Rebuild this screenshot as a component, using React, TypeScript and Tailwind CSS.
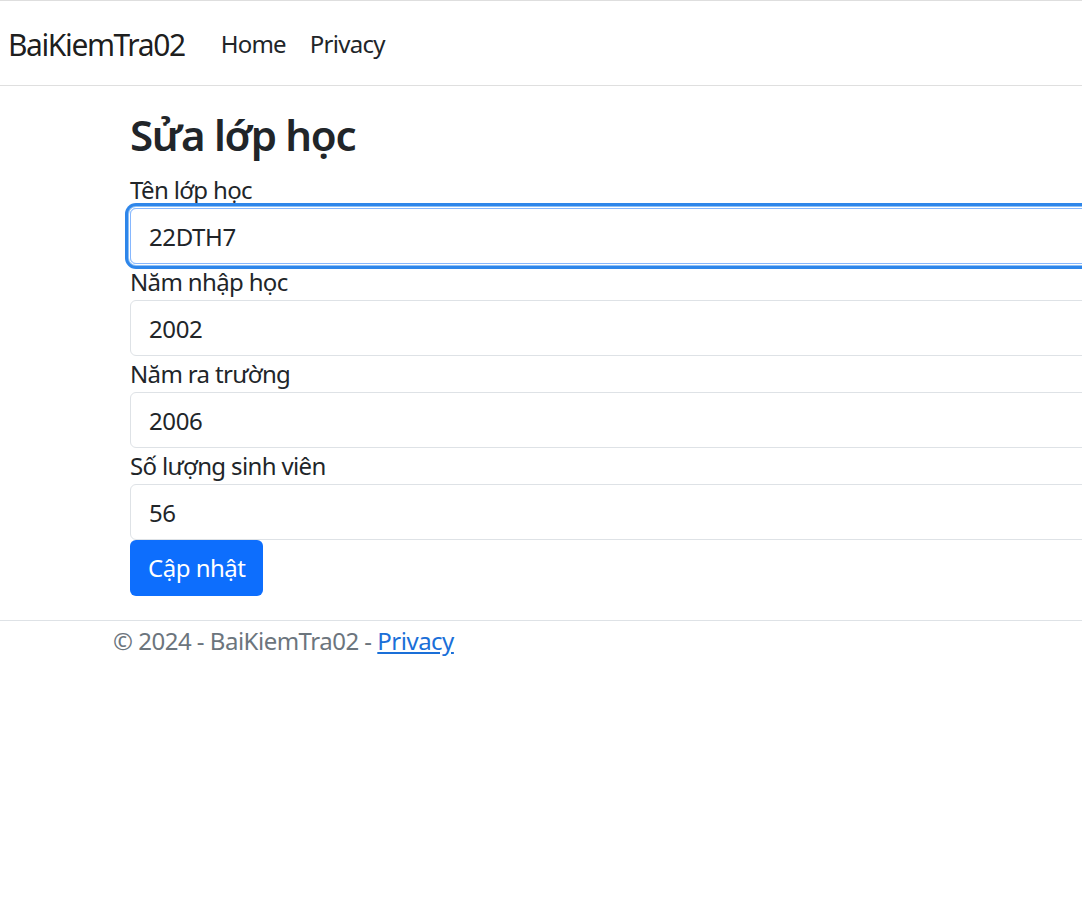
import React from 'react';

const fields = [
  { id: 'ten', label: 'Tên lớp học', value: '22DTH7', focused: true },
  { id: 'nam-nhap', label: 'Năm nhập học', value: '2002' },
  { id: 'nam-ra', label: 'Năm ra trường', value: '2006' },
  { id: 'so-luong', label: 'Số lượng sinh viên', value: '56' },
];

export default function App() {
  return (
    <div className="w-[1082px] min-h-[912px] overflow-hidden bg-white text-[#212529] font-['Noto_Sans',sans-serif] tracking-[-0.6px] border-t border-[#dedede]">
      {/* Navbar */}
      <header className="h-[85px] border-b border-[#dfdfdf] flex items-center pl-[8px]">
        <a href="#" className="text-[30px] leading-[45px] tracking-[-1.4px] text-black/90 mr-[24px] pt-[2px]">
          BaiKiemTra02
        </a>
        <nav className="flex pt-[2px]">
          <a href="#" className="px-[12px] text-[24px] leading-[36px] tracking-[-0.8px] text-[#212529]">Home</a>
          <a href="#" className="px-[12px] text-[24px] leading-[36px] tracking-[-0.7px] text-[#212529]">Privacy</a>
        </nav>
      </header>

      {/* Main */}
      <main className="pt-[24px] pl-[130px] pb-[24px]">
        <h2 className="text-[42px] leading-[50px] font-semibold tracking-[-1.3px] mb-[12px]">Sửa lớp học</h2>
        <form className="w-[1200px] flex flex-col">
          {fields.map((f) => (
            <div key={f.id} className="flex flex-col">
              <label htmlFor={f.id} className="text-[24px] leading-[36px] tracking-[-0.65px]">
                {f.label}
              </label>
              <input
                id={f.id}
                readOnly
                value={f.value}
                className={
                  f.focused
                    ? 'h-[56px] px-[18px] text-[24px] tracking-[-0.4px] rounded-[6px] border border-[#86b7fe] outline-none shadow-[0_0_0_1px_#ffffff,0_0_0_2px_#8fc0f5,0_0_0_5px_#2e86ea]'
                    : 'h-[56px] px-[18px] text-[24px] tracking-[-0.4px] rounded-[6px] border border-[#dee2e6] outline-none'
                }
              />
            </div>
          ))}
          <div>
            <button
              type="button"
              className="h-[56px] px-[18px] text-[24px] leading-[36px] tracking-[-0.5px] text-white bg-[#0d6efd] rounded-[6px]"
            >
              Cập nhật
            </button>
          </div>
        </form>
      </main>

      {/* Footer */}
      <footer className="border-t border-[#dee2e6] pl-[113px] text-[24px] leading-[40px] tracking-[-0.5px] text-[#6c757d]">
        © 2024 - BaiKiemTra02 - <a href="#" className="text-[#1a6fd8] underline">Privacy</a>
      </footer>
    </div>
  );
}
